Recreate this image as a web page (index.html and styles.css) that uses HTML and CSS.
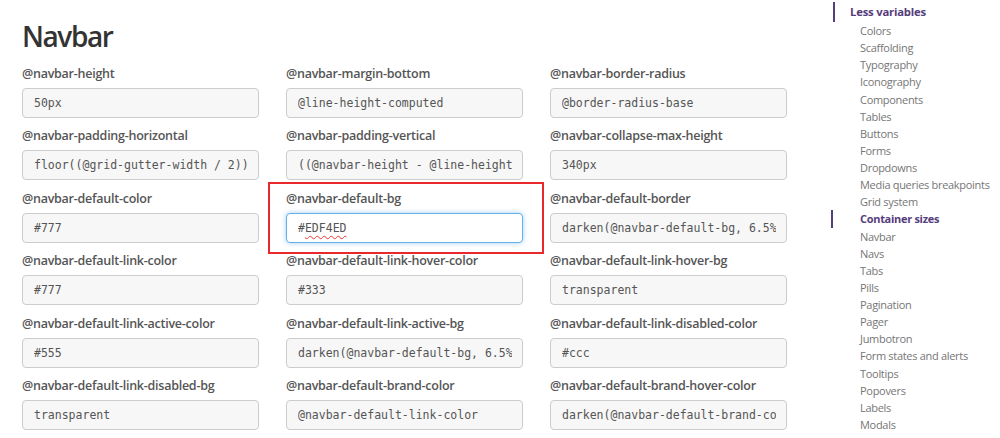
FILE: index.html
```html
<!DOCTYPE html>
<html>
<head>
<meta charset="utf-8">
<link rel="stylesheet" href="styles.css">
</head>
<body>
<div class="page">
  <main class="main">
    <h1 class="title">Navbar</h1>
    <div class="grid">
      <div class="field"><label class="label">@navbar-height</label><div class="input"><span class="value">50px</span></div></div>
      <div class="field"><label class="label">@navbar-margin-bottom</label><div class="input"><span class="value">@line-height-computed</span></div></div>
      <div class="field"><label class="label">@navbar-border-radius</label><div class="input"><span class="value">@border-radius-base</span></div></div>

      <div class="field"><label class="label">@navbar-padding-horizontal</label><div class="input"><span class="value">floor((@grid-gutter-width / 2))</span></div></div>
      <div class="field"><label class="label">@navbar-padding-vertical</label><div class="input"><span class="value">((@navbar-height - @line-height-computed) / 2)</span></div></div>
      <div class="field"><label class="label">@navbar-collapse-max-height</label><div class="input"><span class="value">340px</span></div></div>

      <div class="field"><label class="label">@navbar-default-color</label><div class="input"><span class="value">#777</span></div></div>
      <div class="field highlighted"><label class="label">@navbar-default-bg</label><div class="input focused"><span class="value">#<span class="misspelled">EDF4ED</span></span></div></div>
      <div class="field"><label class="label">@navbar-default-border</label><div class="input"><span class="value">darken(@navbar-default-bg, 6.5%)</span></div></div>

      <div class="field"><label class="label">@navbar-default-link-color</label><div class="input"><span class="value">#777</span></div></div>
      <div class="field"><label class="label">@navbar-default-link-hover-color</label><div class="input"><span class="value">#333</span></div></div>
      <div class="field"><label class="label">@navbar-default-link-hover-bg</label><div class="input"><span class="value">transparent</span></div></div>

      <div class="field"><label class="label">@navbar-default-link-active-color</label><div class="input"><span class="value">#555</span></div></div>
      <div class="field"><label class="label">@navbar-default-link-active-bg</label><div class="input"><span class="value">darken(@navbar-default-bg, 6.5%)</span></div></div>
      <div class="field"><label class="label">@navbar-default-link-disabled-color</label><div class="input"><span class="value">#ccc</span></div></div>

      <div class="field"><label class="label">@navbar-default-link-disabled-bg</label><div class="input"><span class="value">transparent</span></div></div>
      <div class="field"><label class="label">@navbar-default-brand-color</label><div class="input"><span class="value">@navbar-default-link-color</span></div></div>
      <div class="field"><label class="label">@navbar-default-brand-hover-color</label><div class="input"><span class="value">darken(@navbar-default-brand-color, 10%)</span></div></div>
    </div>
  </main>
  <nav class="sidebar">
    <div class="side-group active">Less variables</div>
    <ul class="side-list">
      <li>Colors</li>
      <li>Scaffolding</li>
      <li>Typography</li>
      <li>Iconography</li>
      <li>Components</li>
      <li>Tables</li>
      <li>Buttons</li>
      <li>Forms</li>
      <li>Dropdowns</li>
      <li>Media queries breakpoints</li>
      <li>Grid system</li>
      <li class="current">Container sizes</li>
      <li>Navbar</li>
      <li>Navs</li>
      <li>Tabs</li>
      <li>Pills</li>
      <li>Pagination</li>
      <li>Pager</li>
      <li>Jumbotron</li>
      <li>Form states and alerts</li>
      <li>Tooltips</li>
      <li>Popovers</li>
      <li>Labels</li>
      <li>Modals</li>
    </ul>
  </nav>
</div>
</body>
</html>
```

FILE: styles.css
```css
html, body {
  margin: 0;
  padding: 0;
  background: #fff;
  overflow: hidden;
}
body {
  font-family: "Open Sans", "Noto Sans", sans-serif;
  color: #333;
  width: 1000px;
  height: 438px;
}
.page {
  display: flex;
  align-items: flex-start;
}
.main {
  width: 765px;
  padding-left: 22px;
  flex: none;
}
.title {
  margin: 18px 0 0 0;
  font-size: 28px;
  line-height: 36px;
  font-weight: 600;
  color: #333;
  letter-spacing: -1.4px;
}
.grid {
  margin-top: 10px;
  display: grid;
  grid-template-columns: repeat(3, 237px);
  column-gap: 27px;
  row-gap: 8.4px;
}
.field {
  display: flex;
  flex-direction: column;
}
.label {
  font-size: 12.5px;
  font-weight: 600;
  color: #555;
  line-height: 20px;
  height: 20px;
  margin-bottom: 4px;
  white-space: nowrap;
  letter-spacing: -0.25px;
}
.input {
  box-sizing: border-box;
  height: 30px;
  border: 1px solid #ccc;
  border-radius: 4px;
  background: #f7f7f7;
  padding: 0 10px 0 11px;
  font-family: "DejaVu Sans Mono", "Liberation Mono", monospace;
  font-size: 11.5px;
  line-height: 28px;
  color: #555;
}
.value {
  display: block;
  white-space: nowrap;
  overflow: hidden;
}
.input.focused {
  background: #fff;
  border-color: #66afe9;
  box-shadow: 0 0 5px rgba(102, 175, 233, 0.6);
}
.misspelled {
  text-decoration: underline wavy #e33;
  text-decoration-thickness: 1px;
  text-underline-offset: 3px;
}
.highlighted {
  position: relative;
}
.highlighted::after {
  content: "";
  position: absolute;
  left: -18px;
  right: -21px;
  top: -7px;
  bottom: -11px;
  border: 2px solid #e8282b;
  pointer-events: none;
}
.sidebar {
  margin-left: 46px;
  padding-top: 2px;
  font-family: "Open Sans", "Noto Sans", sans-serif;
  font-size: 11px;
}
.side-group {
  border-left: 2px solid #563d7c;
  padding-left: 15px;
  font-weight: 700;
  color: #563d7c;
  line-height: 20px;
  font-size: 11.3px;
  letter-spacing: -0.2px;
}
.side-list {
  list-style: none;
  margin: 0;
  padding: 0;
}
.side-list li {
  line-height: 17.13px;
  padding-left: 27px;
  color: #767676;
  white-space: nowrap;
  letter-spacing: -0.3px;
}
.side-list li.current {
  color: #563d7c;
  font-weight: 700;
  position: relative;
}
.side-list li.current::before {
  content: "";
  position: absolute;
  left: -2px;
  top: 0;
  bottom: 0;
  border-left: 2px solid #563d7c;
}
```
